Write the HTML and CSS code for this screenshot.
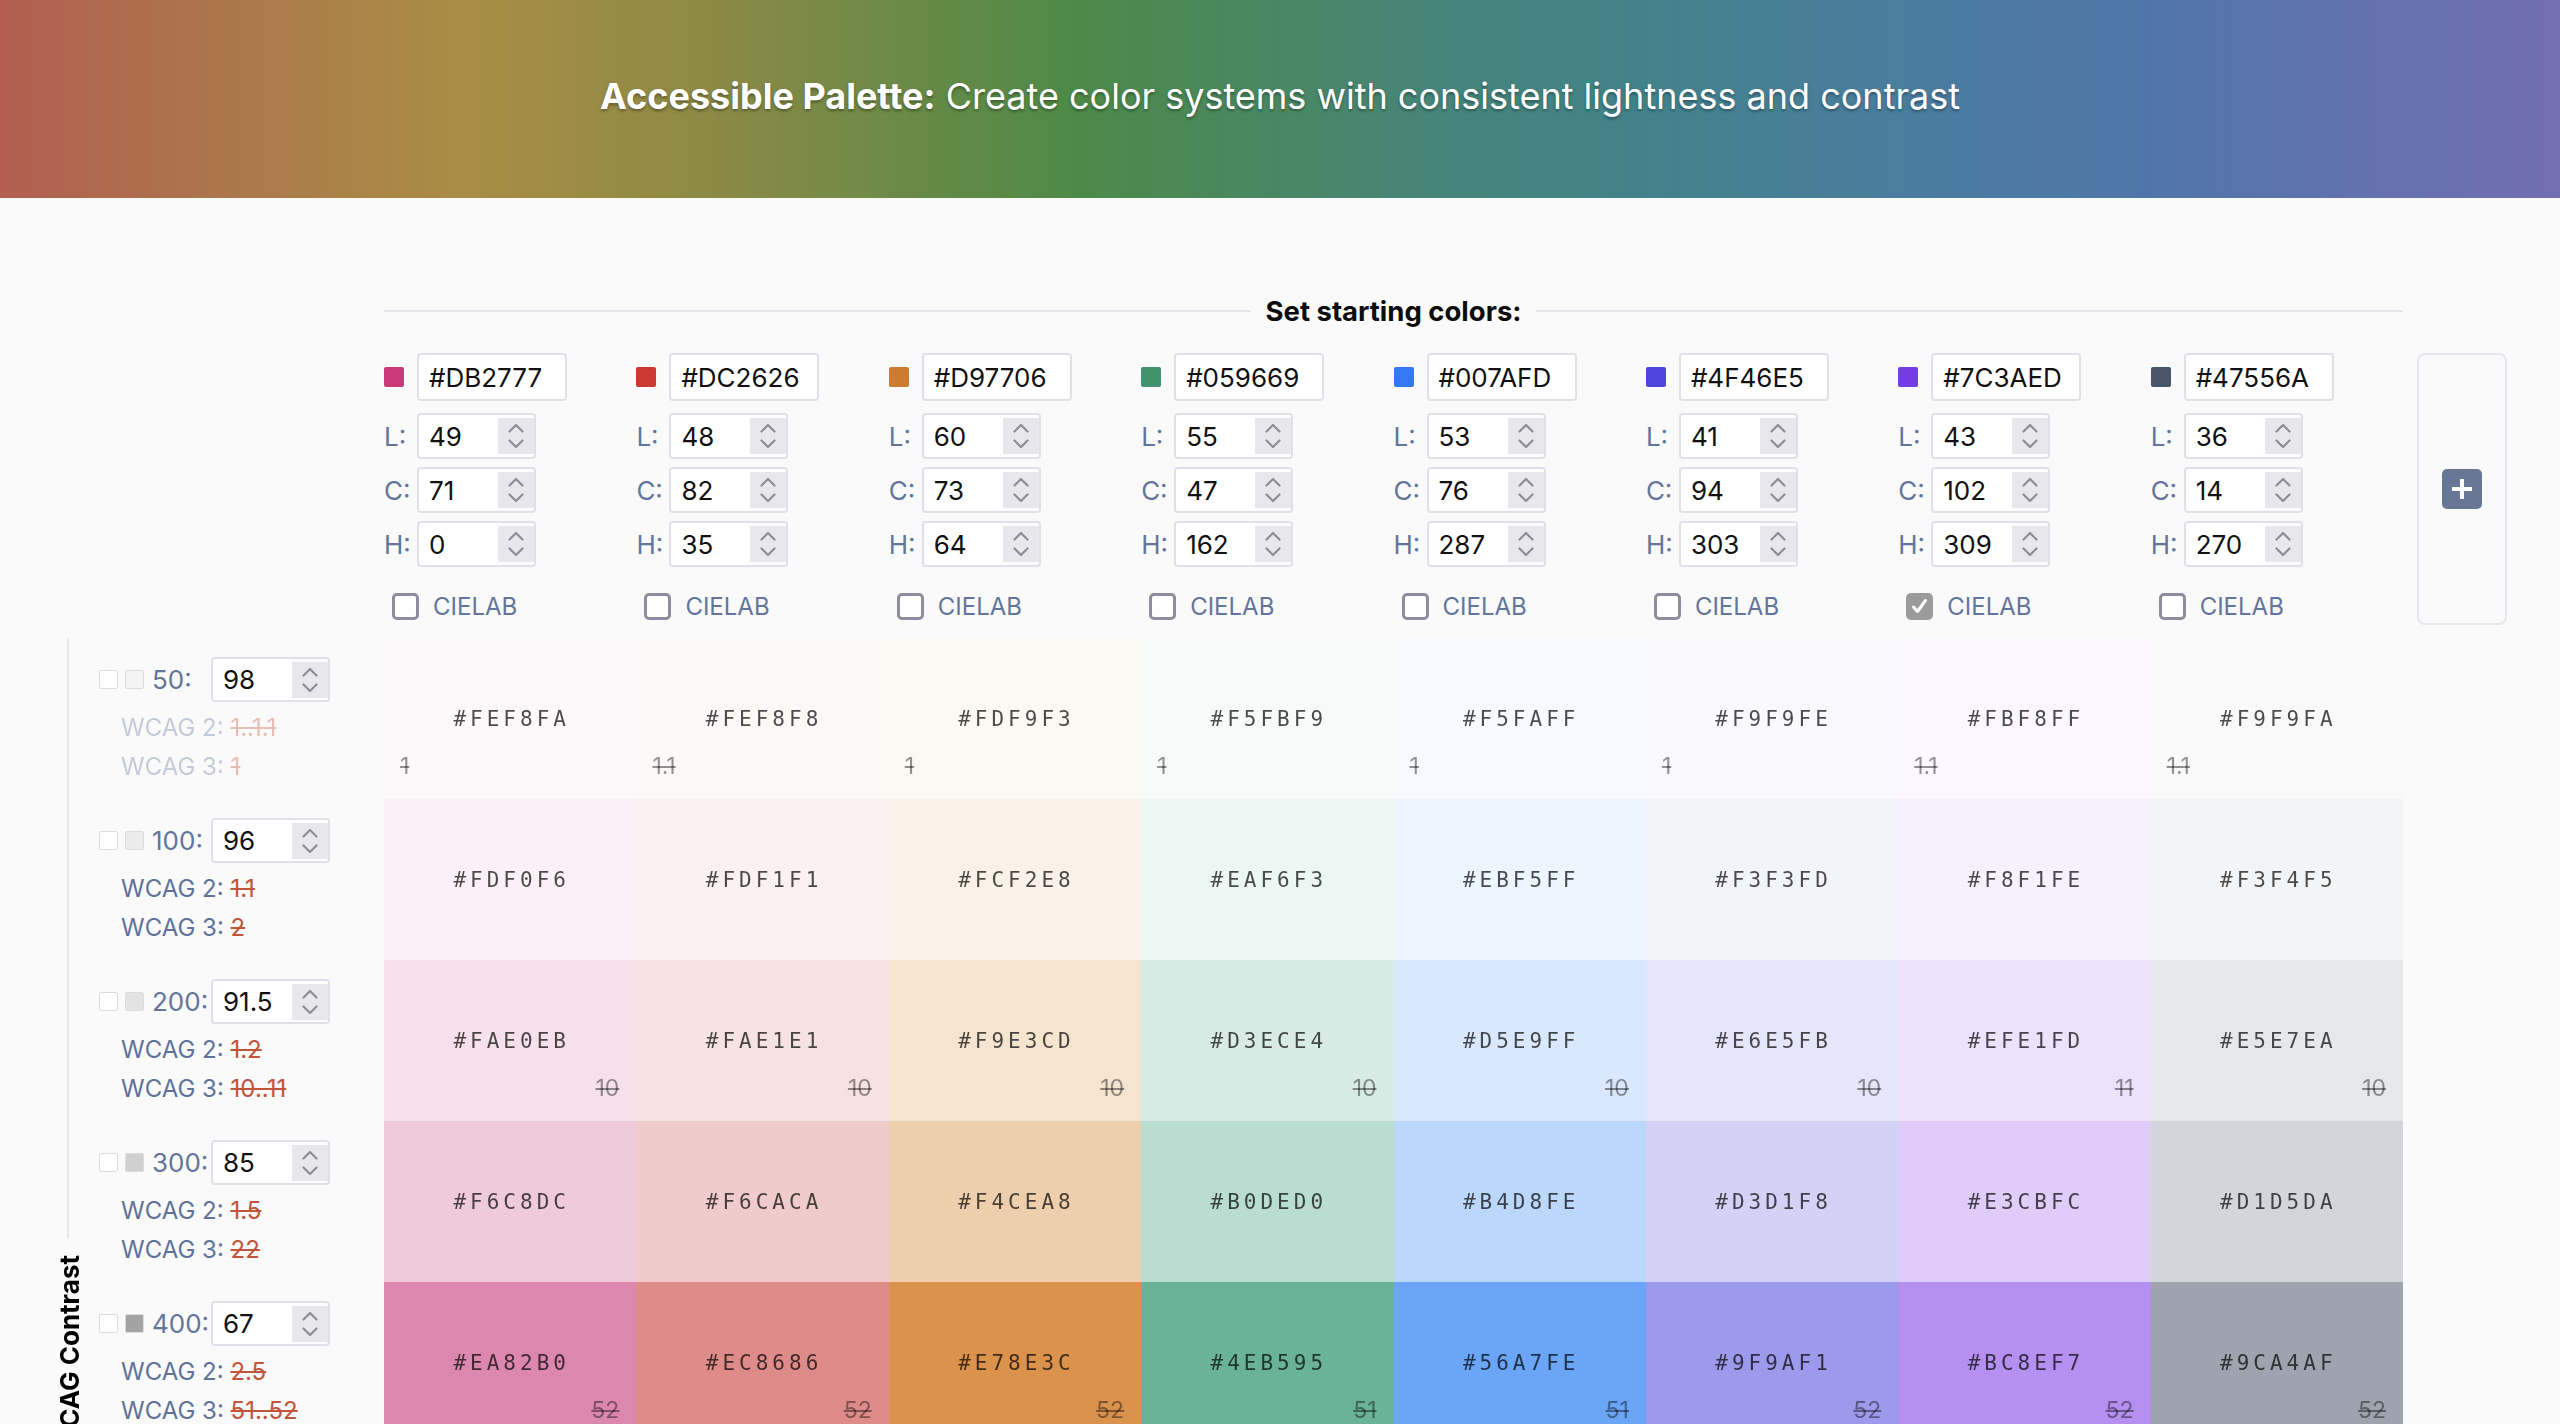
FILE: index.html
```html
<!DOCTYPE html>
<html lang="en">
<head>
<meta charset="utf-8">
<title>Accessible Palette</title>
<link rel="stylesheet" href="styles.css">
</head>
<body>
<svg class="defs" width="0" height="0" aria-hidden="true">
  <filter id="p3" color-interpolation-filters="linearRGB">
    <feColorMatrix type="matrix" values="0.8225 0.1774 0 0 0  0.0332 0.9669 0 0 0  0.0171 0.0724 0.9108 0 0  0 0 0 1 0"/>
  </filter>
</svg>
<header class="hero">
  <h1 class="hero-title"><strong>Accessible Palette:</strong> Create color systems with consistent lightness and contrast</h1>
</header>

<main class="main">
  <section class="starter">
    <div class="starter-head"><span class="rule"></span><h2 class="starter-title">Set starting colors:</h2><span class="rule"></span></div>
    <div class="starter-body">
      <div class="cols">
        <div class="col">
          <div class="hex-row"><span class="swatch" style="background:#DB2777"></span><div class="hex-input">#DB2777</div></div>
          <div class="field-row"><span class="field-label">L:</span><div class="num"><span class="num-val">49</span><span class="spin"><svg width="16" height="30" viewBox="0 0 16 30"><path d="M1.5 10.5 8 4 14.5 10.5M1.5 19.5 8 26 14.5 19.5"/></svg></span></div></div>
          <div class="field-row"><span class="field-label">C:</span><div class="num"><span class="num-val">71</span><span class="spin"><svg width="16" height="30" viewBox="0 0 16 30"><path d="M1.5 10.5 8 4 14.5 10.5M1.5 19.5 8 26 14.5 19.5"/></svg></span></div></div>
          <div class="field-row"><span class="field-label">H:</span><div class="num"><span class="num-val">0</span><span class="spin"><svg width="16" height="30" viewBox="0 0 16 30"><path d="M1.5 10.5 8 4 14.5 10.5M1.5 19.5 8 26 14.5 19.5"/></svg></span></div></div>
          <label class="cielab"><span class="cbox"></span>CIELAB</label>
        </div>
        <div class="col">
          <div class="hex-row"><span class="swatch" style="background:#DC2626"></span><div class="hex-input">#DC2626</div></div>
          <div class="field-row"><span class="field-label">L:</span><div class="num"><span class="num-val">48</span><span class="spin"><svg width="16" height="30" viewBox="0 0 16 30"><path d="M1.5 10.5 8 4 14.5 10.5M1.5 19.5 8 26 14.5 19.5"/></svg></span></div></div>
          <div class="field-row"><span class="field-label">C:</span><div class="num"><span class="num-val">82</span><span class="spin"><svg width="16" height="30" viewBox="0 0 16 30"><path d="M1.5 10.5 8 4 14.5 10.5M1.5 19.5 8 26 14.5 19.5"/></svg></span></div></div>
          <div class="field-row"><span class="field-label">H:</span><div class="num"><span class="num-val">35</span><span class="spin"><svg width="16" height="30" viewBox="0 0 16 30"><path d="M1.5 10.5 8 4 14.5 10.5M1.5 19.5 8 26 14.5 19.5"/></svg></span></div></div>
          <label class="cielab"><span class="cbox"></span>CIELAB</label>
        </div>
        <div class="col">
          <div class="hex-row"><span class="swatch" style="background:#D97706"></span><div class="hex-input">#D97706</div></div>
          <div class="field-row"><span class="field-label">L:</span><div class="num"><span class="num-val">60</span><span class="spin"><svg width="16" height="30" viewBox="0 0 16 30"><path d="M1.5 10.5 8 4 14.5 10.5M1.5 19.5 8 26 14.5 19.5"/></svg></span></div></div>
          <div class="field-row"><span class="field-label">C:</span><div class="num"><span class="num-val">73</span><span class="spin"><svg width="16" height="30" viewBox="0 0 16 30"><path d="M1.5 10.5 8 4 14.5 10.5M1.5 19.5 8 26 14.5 19.5"/></svg></span></div></div>
          <div class="field-row"><span class="field-label">H:</span><div class="num"><span class="num-val">64</span><span class="spin"><svg width="16" height="30" viewBox="0 0 16 30"><path d="M1.5 10.5 8 4 14.5 10.5M1.5 19.5 8 26 14.5 19.5"/></svg></span></div></div>
          <label class="cielab"><span class="cbox"></span>CIELAB</label>
        </div>
        <div class="col">
          <div class="hex-row"><span class="swatch" style="background:#059669"></span><div class="hex-input">#059669</div></div>
          <div class="field-row"><span class="field-label">L:</span><div class="num"><span class="num-val">55</span><span class="spin"><svg width="16" height="30" viewBox="0 0 16 30"><path d="M1.5 10.5 8 4 14.5 10.5M1.5 19.5 8 26 14.5 19.5"/></svg></span></div></div>
          <div class="field-row"><span class="field-label">C:</span><div class="num"><span class="num-val">47</span><span class="spin"><svg width="16" height="30" viewBox="0 0 16 30"><path d="M1.5 10.5 8 4 14.5 10.5M1.5 19.5 8 26 14.5 19.5"/></svg></span></div></div>
          <div class="field-row"><span class="field-label">H:</span><div class="num"><span class="num-val">162</span><span class="spin"><svg width="16" height="30" viewBox="0 0 16 30"><path d="M1.5 10.5 8 4 14.5 10.5M1.5 19.5 8 26 14.5 19.5"/></svg></span></div></div>
          <label class="cielab"><span class="cbox"></span>CIELAB</label>
        </div>
        <div class="col">
          <div class="hex-row"><span class="swatch" style="background:#007AFD"></span><div class="hex-input">#007AFD</div></div>
          <div class="field-row"><span class="field-label">L:</span><div class="num"><span class="num-val">53</span><span class="spin"><svg width="16" height="30" viewBox="0 0 16 30"><path d="M1.5 10.5 8 4 14.5 10.5M1.5 19.5 8 26 14.5 19.5"/></svg></span></div></div>
          <div class="field-row"><span class="field-label">C:</span><div class="num"><span class="num-val">76</span><span class="spin"><svg width="16" height="30" viewBox="0 0 16 30"><path d="M1.5 10.5 8 4 14.5 10.5M1.5 19.5 8 26 14.5 19.5"/></svg></span></div></div>
          <div class="field-row"><span class="field-label">H:</span><div class="num"><span class="num-val">287</span><span class="spin"><svg width="16" height="30" viewBox="0 0 16 30"><path d="M1.5 10.5 8 4 14.5 10.5M1.5 19.5 8 26 14.5 19.5"/></svg></span></div></div>
          <label class="cielab"><span class="cbox"></span>CIELAB</label>
        </div>
        <div class="col">
          <div class="hex-row"><span class="swatch" style="background:#4F46E5"></span><div class="hex-input">#4F46E5</div></div>
          <div class="field-row"><span class="field-label">L:</span><div class="num"><span class="num-val">41</span><span class="spin"><svg width="16" height="30" viewBox="0 0 16 30"><path d="M1.5 10.5 8 4 14.5 10.5M1.5 19.5 8 26 14.5 19.5"/></svg></span></div></div>
          <div class="field-row"><span class="field-label">C:</span><div class="num"><span class="num-val">94</span><span class="spin"><svg width="16" height="30" viewBox="0 0 16 30"><path d="M1.5 10.5 8 4 14.5 10.5M1.5 19.5 8 26 14.5 19.5"/></svg></span></div></div>
          <div class="field-row"><span class="field-label">H:</span><div class="num"><span class="num-val">303</span><span class="spin"><svg width="16" height="30" viewBox="0 0 16 30"><path d="M1.5 10.5 8 4 14.5 10.5M1.5 19.5 8 26 14.5 19.5"/></svg></span></div></div>
          <label class="cielab"><span class="cbox"></span>CIELAB</label>
        </div>
        <div class="col">
          <div class="hex-row"><span class="swatch" style="background:#7C3AED"></span><div class="hex-input">#7C3AED</div></div>
          <div class="field-row"><span class="field-label">L:</span><div class="num"><span class="num-val">43</span><span class="spin"><svg width="16" height="30" viewBox="0 0 16 30"><path d="M1.5 10.5 8 4 14.5 10.5M1.5 19.5 8 26 14.5 19.5"/></svg></span></div></div>
          <div class="field-row"><span class="field-label">C:</span><div class="num"><span class="num-val">102</span><span class="spin"><svg width="16" height="30" viewBox="0 0 16 30"><path d="M1.5 10.5 8 4 14.5 10.5M1.5 19.5 8 26 14.5 19.5"/></svg></span></div></div>
          <div class="field-row"><span class="field-label">H:</span><div class="num"><span class="num-val">309</span><span class="spin"><svg width="16" height="30" viewBox="0 0 16 30"><path d="M1.5 10.5 8 4 14.5 10.5M1.5 19.5 8 26 14.5 19.5"/></svg></span></div></div>
          <label class="cielab"><span class="cbox checked"><svg width="19" height="19" viewBox="0 0 19 19"><path d="M3.5 10 7.5 14.5 15.5 3.5"/></svg></span>CIELAB</label>
        </div>
        <div class="col">
          <div class="hex-row"><span class="swatch" style="background:#47556A"></span><div class="hex-input">#47556A</div></div>
          <div class="field-row"><span class="field-label">L:</span><div class="num"><span class="num-val">36</span><span class="spin"><svg width="16" height="30" viewBox="0 0 16 30"><path d="M1.5 10.5 8 4 14.5 10.5M1.5 19.5 8 26 14.5 19.5"/></svg></span></div></div>
          <div class="field-row"><span class="field-label">C:</span><div class="num"><span class="num-val">14</span><span class="spin"><svg width="16" height="30" viewBox="0 0 16 30"><path d="M1.5 10.5 8 4 14.5 10.5M1.5 19.5 8 26 14.5 19.5"/></svg></span></div></div>
          <div class="field-row"><span class="field-label">H:</span><div class="num"><span class="num-val">270</span><span class="spin"><svg width="16" height="30" viewBox="0 0 16 30"><path d="M1.5 10.5 8 4 14.5 10.5M1.5 19.5 8 26 14.5 19.5"/></svg></span></div></div>
          <label class="cielab"><span class="cbox"></span>CIELAB</label>
        </div>
      </div>
      <div class="add-panel"><button class="add-btn" type="button" aria-label="Add color"><span class="plus"></span></button></div>
    </div>
  </section>

  <section class="palette">
    <div class="legend"><span class="legend-line"></span><span class="legend-text">WCAG Contrast</span><span class="legend-line"></span></div>

    <!-- row 50 -->
    <div class="rl faded">
      <div class="rl-top"><span class="mini-box"></span><span class="mini-box" style="background:#f4f4f4"></span><span class="rl-name">50:</span><div class="num num-sm"><span class="num-val">98</span><span class="spin"><svg width="16" height="30" viewBox="0 0 16 30"><path d="M1.5 10.5 8 4 14.5 10.5M1.5 19.5 8 26 14.5 19.5"/></svg></span></div></div>
      <div class="wcag">WCAG 2: <s>1..1.1</s></div>
      <div class="wcag">WCAG 3: <s>1</s></div>
    </div>
    <div class="tile" style="background:#FEF8FA"><span class="hex">#FEF8FA</span><s class="score">1</s></div>
    <div class="tile" style="background:#FEF8F8"><span class="hex">#FEF8F8</span><s class="score">1.1</s></div>
    <div class="tile" style="background:#FDF9F3"><span class="hex">#FDF9F3</span><s class="score">1</s></div>
    <div class="tile" style="background:#F5FBF9"><span class="hex">#F5FBF9</span><s class="score">1</s></div>
    <div class="tile" style="background:#F5FAFF"><span class="hex">#F5FAFF</span><s class="score">1</s></div>
    <div class="tile" style="background:#F9F9FE"><span class="hex">#F9F9FE</span><s class="score">1</s></div>
    <div class="tile" style="background:#FBF8FF"><span class="hex">#FBF8FF</span><s class="score">1.1</s></div>
    <div class="tile" style="background:#F9F9FA"><span class="hex">#F9F9FA</span><s class="score">1.1</s></div>

    <!-- row 100 -->
    <div class="rl">
      <div class="rl-top"><span class="mini-box"></span><span class="mini-box" style="background:#ececec"></span><span class="rl-name">100:</span><div class="num num-sm"><span class="num-val">96</span><span class="spin"><svg width="16" height="30" viewBox="0 0 16 30"><path d="M1.5 10.5 8 4 14.5 10.5M1.5 19.5 8 26 14.5 19.5"/></svg></span></div></div>
      <div class="wcag">WCAG 2: <s>1.1</s></div>
      <div class="wcag">WCAG 3: <s>2</s></div>
    </div>
    <div class="tile" style="background:#FDF0F6"><span class="hex">#FDF0F6</span><s class="score"></s></div>
    <div class="tile" style="background:#FDF1F1"><span class="hex">#FDF1F1</span><s class="score"></s></div>
    <div class="tile" style="background:#FCF2E8"><span class="hex">#FCF2E8</span><s class="score"></s></div>
    <div class="tile" style="background:#EAF6F3"><span class="hex">#EAF6F3</span><s class="score"></s></div>
    <div class="tile" style="background:#EBF5FF"><span class="hex">#EBF5FF</span><s class="score"></s></div>
    <div class="tile" style="background:#F3F3FD"><span class="hex">#F3F3FD</span><s class="score"></s></div>
    <div class="tile" style="background:#F8F1FE"><span class="hex">#F8F1FE</span><s class="score"></s></div>
    <div class="tile" style="background:#F3F4F5"><span class="hex">#F3F4F5</span><s class="score"></s></div>

    <!-- row 200 -->
    <div class="rl">
      <div class="rl-top"><span class="mini-box"></span><span class="mini-box" style="background:#e3e3e3"></span><span class="rl-name">200:</span><div class="num num-sm"><span class="num-val">91.5</span><span class="spin"><svg width="16" height="30" viewBox="0 0 16 30"><path d="M1.5 10.5 8 4 14.5 10.5M1.5 19.5 8 26 14.5 19.5"/></svg></span></div></div>
      <div class="wcag">WCAG 2: <s>1.2</s></div>
      <div class="wcag">WCAG 3: <s>10..11</s></div>
    </div>
    <div class="tile right" style="background:#FAE0EB"><span class="hex">#FAE0EB</span><s class="score">10</s></div>
    <div class="tile right" style="background:#FAE1E1"><span class="hex">#FAE1E1</span><s class="score">10</s></div>
    <div class="tile right" style="background:#F9E3CD"><span class="hex">#F9E3CD</span><s class="score">10</s></div>
    <div class="tile right" style="background:#D3ECE4"><span class="hex">#D3ECE4</span><s class="score">10</s></div>
    <div class="tile right" style="background:#D5E9FF"><span class="hex">#D5E9FF</span><s class="score">10</s></div>
    <div class="tile right" style="background:#E6E5FB"><span class="hex">#E6E5FB</span><s class="score">10</s></div>
    <div class="tile right" style="background:#EFE1FD"><span class="hex">#EFE1FD</span><s class="score">11</s></div>
    <div class="tile right" style="background:#E5E7EA"><span class="hex">#E5E7EA</span><s class="score">10</s></div>

    <!-- row 300 -->
    <div class="rl">
      <div class="rl-top"><span class="mini-box"></span><span class="mini-box" style="background:#d0d0d0"></span><span class="rl-name">300:</span><div class="num num-sm"><span class="num-val">85</span><span class="spin"><svg width="16" height="30" viewBox="0 0 16 30"><path d="M1.5 10.5 8 4 14.5 10.5M1.5 19.5 8 26 14.5 19.5"/></svg></span></div></div>
      <div class="wcag">WCAG 2: <s>1.5</s></div>
      <div class="wcag">WCAG 3: <s>22</s></div>
    </div>
    <div class="tile" style="background:#F6C8DC"><span class="hex">#F6C8DC</span><s class="score"></s></div>
    <div class="tile" style="background:#F6CACA"><span class="hex">#F6CACA</span><s class="score"></s></div>
    <div class="tile" style="background:#F4CEA8"><span class="hex">#F4CEA8</span><s class="score"></s></div>
    <div class="tile" style="background:#B0DED0"><span class="hex">#B0DED0</span><s class="score"></s></div>
    <div class="tile" style="background:#B4D8FE"><span class="hex">#B4D8FE</span><s class="score"></s></div>
    <div class="tile" style="background:#D3D1F8"><span class="hex">#D3D1F8</span><s class="score"></s></div>
    <div class="tile" style="background:#E3CBFC"><span class="hex">#E3CBFC</span><s class="score"></s></div>
    <div class="tile" style="background:#D1D5DA"><span class="hex">#D1D5DA</span><s class="score"></s></div>

    <!-- row 400 -->
    <div class="rl">
      <div class="rl-top"><span class="mini-box"></span><span class="mini-box" style="background:#a3a3a3"></span><span class="rl-name">400:</span><div class="num num-sm"><span class="num-val">67</span><span class="spin"><svg width="16" height="30" viewBox="0 0 16 30"><path d="M1.5 10.5 8 4 14.5 10.5M1.5 19.5 8 26 14.5 19.5"/></svg></span></div></div>
      <div class="wcag">WCAG 2: <s>2.5</s></div>
      <div class="wcag">WCAG 3: <s>51..52</s></div>
    </div>
    <div class="tile right" style="background:#EA82B0"><span class="hex">#EA82B0</span><s class="score">52</s></div>
    <div class="tile right" style="background:#EC8686"><span class="hex">#EC8686</span><s class="score">52</s></div>
    <div class="tile right" style="background:#E78E3C"><span class="hex">#E78E3C</span><s class="score">52</s></div>
    <div class="tile right" style="background:#4EB595"><span class="hex">#4EB595</span><s class="score">51</s></div>
    <div class="tile right" style="background:#56A7FE"><span class="hex">#56A7FE</span><s class="score">51</s></div>
    <div class="tile right" style="background:#9F9AF1"><span class="hex">#9F9AF1</span><s class="score">52</s></div>
    <div class="tile right" style="background:#BC8EF7"><span class="hex">#BC8EF7</span><s class="score">52</s></div>
    <div class="tile right" style="background:#9CA4AF"><span class="hex">#9CA4AF</span><s class="score">52</s></div>
  </section>
</main>
</body>
</html>
```

FILE: styles.css
```css
* { box-sizing: border-box; }

html, body {
  margin: 0;
  padding: 0;
  background: #fafafa;
  font-family: Inter, "Noto Sans", "Liberation Sans", sans-serif;
  color: #111;
}

.defs {
  position: absolute;
  width: 0;
  height: 0;
  overflow: hidden;
}

/* ---------- header ---------- */
.hero {
  height: 198px;
  padding-bottom: 7px;
  display: flex;
  align-items: center;
  justify-content: center;
  background: linear-gradient(to right,
    #b35e51 0%,
    #ab7a4a 10%,
    #a98d45 18%,
    #8b8a45 28%,
    #4d8a48 42%,
    #468579 56%,
    #42838a 64%,
    #4a7d9e 74%,
    #5076a9 84%,
    #746fb2 100%);
}

.hero-title {
  margin: 0;
  font-size: 36px;
  font-weight: 400;
  color: #fff;
  text-shadow: 0 2px 3px rgba(0, 0, 0, 0.35);
}

.hero-title strong { font-weight: 700; }

/* ---------- starting colours ---------- */
.main { padding-bottom: 40px; }

.starter {
  padding-left: 384px;
  padding-top: 97px;
}

.starter-head {
  width: 2019px;
  height: 32px;
  display: flex;
  align-items: center;
  gap: 15px;
}

.rule {
  flex: 1;
  height: 2px;
  background: #e5e6eb;
}

.starter-title {
  margin: 0;
  font-size: 27.5px;
  line-height: 32px;
  font-weight: 700;
  color: #0c0c0c;
}

.starter-body {
  margin-top: 26px;
  display: flex;
  align-items: flex-start;
}

.cols {
  width: 2019px;
  display: grid;
  grid-template-columns: repeat(8, 1fr);
}

.col {
  display: flex;
  flex-direction: column;
}

.hex-row {
  display: flex;
  align-items: center;
  height: 48px;
  margin-bottom: 12px;
}

.swatch {
  width: 20px;
  height: 20px;
  border-radius: 2px;
  margin-right: 13px;
  filter: url(#p3);
}

.hex-input {
  width: 150px;
  height: 48px;
  border: 2px solid #dfe1e8;
  border-radius: 4px;
  background: #fff;
  display: flex;
  align-items: center;
  padding-left: 10px;
  font-size: 26px;
  color: #111;
}

.field-row {
  display: flex;
  align-items: center;
  height: 46px;
  margin-bottom: 8px;
}

.field-label {
  width: 33px;
  font-size: 26px;
  color: #63759a;
}

.num {
  width: 119px;
  height: 46px;
  border: 2px solid #dfe1e8;
  border-radius: 4px;
  background: #fff;
  display: flex;
  align-items: center;
  padding-left: 10px;
}

.num-sm { height: 45px; }

.num-val {
  flex: 1;
  font-size: 26px;
  color: #111;
}

.spin {
  width: 36px;
  height: 36px;
  background: #e8e8ec;
  display: flex;
  align-items: center;
  justify-content: center;
}

.spin svg path {
  fill: none;
  stroke: #8d8d99;
  stroke-width: 2.2;
  stroke-linecap: round;
  stroke-linejoin: round;
}

.cielab {
  margin-top: 18px;
  display: flex;
  align-items: center;
  gap: 14px;
  padding-left: 8px;
  height: 27px;
  font-size: 24px;
  color: #63759a;
}

.cbox {
  width: 27px;
  height: 27px;
  border: 3px solid #8e8d9d;
  border-radius: 5px;
  background: #fff;
  display: flex;
  align-items: center;
  justify-content: center;
}

.cbox.checked {
  background: #9b9b9b;
  border-color: #9b9b9b;
}

.cbox svg path {
  fill: none;
  stroke: #fff;
  stroke-width: 3;
  stroke-linecap: round;
  stroke-linejoin: round;
}

.add-panel {
  margin-left: 14px;
  width: 90px;
  height: 272px;
  border: 2px solid #e6e6ee;
  border-radius: 8px;
  display: flex;
  align-items: center;
  justify-content: center;
}

.add-btn {
  width: 40px;
  height: 40px;
  border: 0;
  border-radius: 5px;
  background: #687796;
  display: flex;
  align-items: center;
  justify-content: center;
  padding: 0;
}

.plus {
  width: 20px;
  height: 20px;
  background:
    linear-gradient(#fff, #fff) center / 20px 4px no-repeat,
    linear-gradient(#fff, #fff) center / 4px 20px no-repeat;
}

/* ---------- palette ---------- */
.palette {
  margin-top: 13px;
  display: grid;
  grid-template-columns: 99px 285px repeat(8, 252.375px);
  grid-auto-rows: 161px;
}

.legend {
  grid-column: 1;
  grid-row: 1 / span 5;
  display: flex;
  flex-direction: column;
  align-items: flex-start;
  padding-left: 57px;
}

.legend-line {
  width: 2px;
  height: 601px;
  margin-left: 10px;
  background: #e8e8ee;
  flex: none;
}

.legend-text {
  margin-top: 16px;
  margin-bottom: 16px;
  writing-mode: vertical-rl;
  transform: rotate(180deg);
  font-size: 26px;
  line-height: 26px;
  font-weight: 700;
  color: #000;
  white-space: nowrap;
  flex: none;
}

.rl {
  grid-column: 2;
  padding-top: 19px;
}

.rl-top {
  display: flex;
  align-items: center;
  height: 45px;
}

.mini-box {
  width: 19px;
  height: 19px;
  border: 1.5px solid #dcdcdc;
  border-radius: 2px;
  background: #fff;
  margin-right: 7px;
}

.rl-name {
  width: 59px;
  margin-left: 1px;
  font-size: 26px;
  color: #63759a;
}

.wcag {
  padding-left: 22px;
  font-size: 24px;
  line-height: 39px;
  color: #5f7299;
}

.rl-top + .wcag { margin-top: 6px; }

.wcag s {
  color: #c1553b;
  text-decoration-thickness: 2px;
}

.rl.faded .wcag { opacity: 0.35; }

.tile {
  display: flex;
  flex-direction: column;
  padding: 67px 17px 0 16px;
  filter: url(#p3);
}

.hex {
  text-align: center;
  font-family: "DejaVu Sans Mono", "Liberation Mono", monospace;
  font-size: 21px;
  line-height: 28px;
  letter-spacing: 4px;
  padding-left: 4px;
  color: rgba(0, 0, 0, 0.7);
}

.score {
  margin-top: 19px;
  height: 28px;
  font-size: 23px;
  line-height: 28px;
  color: rgba(0, 0, 0, 0.42);
  text-decoration-thickness: 2px;
}

.tile.right .score { text-align: right; }
```
